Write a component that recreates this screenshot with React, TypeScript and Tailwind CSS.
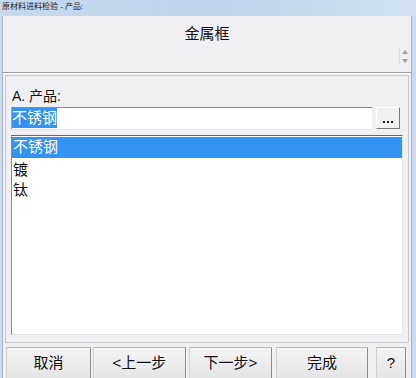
import React from "react";

const font = { fontFamily: '"Liberation Sans","Noto Sans CJK SC",sans-serif' };

function Btn({ w, children }: { w: string; children: React.ReactNode }) {
  return (
    <div
      className={`${w} h-[34px] shrink-0 flex items-start justify-center pt-[6px] text-[15px] leading-[18px] text-[#111] bg-gradient-to-b from-[#f4f4f4] to-[#e4e4e4] border border-t-[#b8b8b8] border-l-[#d0d0d0] border-r-[#8c8c8c] border-b-[#8c8c8c]`}
    >
      {children}
    </div>
  );
}

export default function App() {
  return (
    <div className="w-[416px] h-[378px] overflow-hidden bg-[#c9dbef] flex flex-col" style={font}>
      {/* title bar */}
      <div className="h-[16px] shrink-0 bg-gradient-to-r from-[#c6daef] via-[#bcd3ec] to-[#d2e2f3] px-[2px] text-[8px] leading-[14px] text-[#1a1a1a] whitespace-nowrap">
        原材料进料检验 - 产品:
      </div>
      <div className="flex-1 flex pl-[2px] pr-[4px]">
        <div className="flex-1 flex flex-col bg-[#f0eff1] border-l border-r border-[#a9b3bf]">
          {/* header */}
          <div className="h-[56px] shrink-0 relative flex justify-center pt-[8px]">
            <div className="text-[15px] leading-[20px] text-[#111]">金属框</div>
            <div className="absolute right-[2px] top-[32px] w-[10px] h-[17px] border-l border-[#dcdcdc] flex flex-col items-center justify-between py-[2px]">
              <svg width="6" height="4" viewBox="0 0 6 4"><path d="M0 4 L3 0 L6 4 Z" fill="#a0a0a0" /></svg>
              <svg width="6" height="4" viewBox="0 0 6 4"><path d="M0 0 L3 4 L6 0 Z" fill="#a0a0a0" /></svg>
            </div>
          </div>
          <div className="h-[2px] shrink-0 border-t border-[#a0a0a0] border-b border-b-[#ffffff]" />
          <div className="h-[1px] shrink-0" />
          {/* inner panel */}
          <div className="mx-[2px] h-[268px] shrink-0 border border-[#c8c8c8] px-[5px] pt-[11px] flex flex-col">
            <div className="text-[14px] leading-[18px] text-[#111] pl-[1px]">A. 产品:</div>
            <div className="mt-[2px] flex items-start gap-[3px]">
              <div className="w-[362px] h-[23px] bg-white border border-t-[#8a8a8a] border-l-[#a8a8a8] border-r-[#f0eff1] border-b-[#e8e4d4] flex items-start">
                <span className="bg-[#3393f2] text-white text-[15px] leading-[20px]">不锈钢</span>
              </div>
              <div className="w-[24px] h-[22px] bg-[#f0eff1] border border-t-white border-l-white border-r-[#7a7a7a] border-b-[#7a7a7a] flex items-end justify-center gap-[2px] pb-[5px]">
                <span className="w-[2px] h-[2px] bg-[#222]" />
                <span className="w-[2px] h-[2px] bg-[#222]" />
                <span className="w-[2px] h-[2px] bg-[#222]" />
              </div>
            </div>
            <div className="mt-[5px] h-[200px] bg-white border border-t-[#6a6a6a] border-l-[#8a8a8a] border-r-[#e6e6e6] border-b-[#e6e6e6] pt-[1px] text-[15px] text-[#111]">
              <div className="h-[21px] leading-[20px] bg-[#3393f2] text-white pl-[1px]">不锈钢</div>
              <div className="h-[21px] leading-[24px] pl-[1px]">镀</div>
              <div className="h-[21px] leading-[22px] pl-[1px]">钛</div>
            </div>
          </div>
          {/* buttons */}
          <div className="mt-[4px] flex pl-[3px]">
            <Btn w="w-[85px]">取消</Btn>
            <div className="w-[2px] shrink-0" />
            <Btn w="w-[93px]">&lt;上一步</Btn>
            <div className="w-[3px] shrink-0" />
            <Btn w="w-[83px]">下一步&gt;</Btn>
            <div className="w-[4px] shrink-0" />
            <Btn w="w-[92px]">完成</Btn>
            <div className="w-[8px] shrink-0" />
            <Btn w="w-[30px]">?</Btn>
          </div>
        </div>
      </div>
    </div>
  );
}
